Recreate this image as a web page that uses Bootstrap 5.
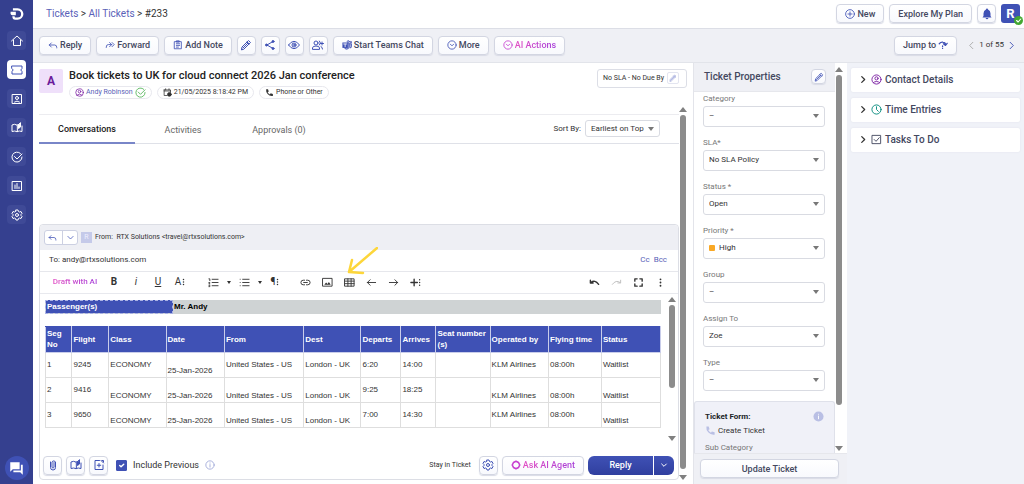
<!DOCTYPE html>
<html lang="en">
<head>
<meta charset="utf-8">
<meta name="viewport" content="width=device-width, initial-scale=1">
<title>Ticket #233</title>
<link href="https://cdn.jsdelivr.net/npm/bootstrap@5.3.0/dist/css/bootstrap.min.css" rel="stylesheet">
<style>
:root{--brand:#3f51b5;--ink:#44485f;--line:#dcdee6;--shade:#eff0f5}
body{font-family:Roboto,"Liberation Sans",sans-serif;font-size:8px;line-height:12px;color:#333;height:100vh;overflow:hidden;background:#fff}
a{text-decoration:none;color:#5a62b8}
svg{display:block;flex:none;fill:none;stroke:currentColor;stroke-width:2;stroke-linecap:round;stroke-linejoin:round;width:11px;height:11px}
.solid{fill:currentColor;stroke:none}
.t7{font-size:7px}.t9{font-size:9px}.t10{font-size:10px}.t11{font-size:11px}
.brandc{color:var(--brand)}
/* side rail */
.rail{width:33px;background:#35408f;flex:none;padding:6px 0 4px}
.rail a{width:19px;height:19px;border-radius:4px;background:#3f4a97;color:#fff}
.rail svg{width:12px;height:12px}
.rail a.on{background:#fff;color:var(--brand)}
.rail a.logo{background:none;height:16px}
.rail .logo svg{width:14px;height:14px}
.rail a.chat{width:24px;height:24px;border-radius:50%;background:#3f51b5}
.rail .chat svg{width:15px;height:15px}
/* buttons */
.tool{display:flex;align-items:center;justify-content:center;gap:2px;height:19px;padding:0 8px;border:1px solid #d3d6e2;border-radius:4px;background:linear-gradient(#fff,#f8f9fd);box-shadow:0 1px 1px #d9dbe6;color:var(--ink);font-size:9px;line-height:12px;font-weight:500;white-space:nowrap}
.tool svg{color:var(--brand);width:10px;height:10px}
.tool.sq{width:19px;padding:0}
.tool.sq svg{width:12px;height:12px}
.pink,.tool.pink svg{color:#c73fd0}
.grad{background:linear-gradient(90deg,#e24fc4,#a63fd8);-webkit-background-clip:text;background-clip:text;color:transparent}
.top-bar{height:29px;border-bottom:1px solid var(--line);padding:0 4px 0 13px}
.user-tile{width:19px;height:19px;border-radius:3px;background:var(--brand);color:#fff;font-size:13px;font-weight:700;position:relative}
.user-tile svg{position:absolute;right:-3px;bottom:-2px;width:9px;height:9px}
.action-bar{height:34px;background:var(--shade);border-bottom:1px solid #e2e4ea;padding:0 7px 0 6px;gap:5px}
/* ticket head */
.face{width:24px;height:24px;border-radius:2px;background:#efe0fa;color:#6a1b9a;font-size:12px;font-weight:700}
.chip{display:flex;align-items:center;gap:2px;height:13px;padding:0 5px;border:1px solid #e8e8ee;border-radius:7px;font-size:7px;line-height:10px;white-space:nowrap}
.chip svg{width:9px;height:9px}
.sla{height:19px;border:1px solid var(--line);border-radius:3px;padding:0 7px 0 5px;font-size:7px}
.sla button{width:12px;height:12px;border:1px solid #e3e5f0;border-radius:2px;background:#fff;color:#8f98d4;padding:1px}
.sla svg{width:8px;height:8px}
.tabs{height:30px;border-top:1px solid #ececf0;border-bottom:1px solid #dfe1e8}
.tabs button{width:96px;height:30px;border:0;background:none;color:#666;font-size:9px;padding:2px 0 0}
.tabs button.on{color:#222;font-weight:500;border-bottom:2px solid #7986c8}
/* selects */
.pick{display:flex;align-items:center;border:1px solid #d9dbe2;border-radius:3px;background:#fff;height:21px;padding:0 5px;gap:4px}
.pick select{appearance:none;border:0;background:none;outline:0;flex:1;min-width:0;font-size:8px;line-height:12px;color:#333;padding:0}
.pick::after{content:"";border:3px solid transparent;border-top:4px solid #777;border-bottom:0}
.sort{height:17px;width:75px}
/* scroll tracks */
.track{width:8px;flex:none;display:flex;flex-direction:column;align-items:center;justify-content:space-between}
.track::before,.track::after{content:"";border:4px solid transparent}
.track::before{border-bottom:5px solid #808080;border-top:0}
.track::after{border-top:5px solid #808080;border-bottom:0}
.track i{width:6px;border-radius:3px;background:#8c8c8c;margin:3px 0 auto}
/* composer */
.composer{margin-top:80px;border:1px solid #dcdee5;border-radius:4px;min-height:0}
.from{height:25px;background:#eeeff4;border-radius:4px 4px 0 0;padding:0 4px;font-size:7px}
.split{height:15px;border:1px solid #ccd0e2;border-radius:3px;background:#fff}
.split button{border:0;background:none;padding:0 3px;width:17px;color:var(--brand);height:100%}
.split button+button{border-left:1px solid #ccd0e2;width:15px}
.split svg{width:9px;height:9px}
.mono{width:11px;height:11px;background:#c5cae9;color:#eef;font-size:7px}
.to{height:22px;border-bottom:1px solid #e6e7ec;padding:0 11px 0 9px}
.to input{border:0;outline:0;font-size:8px;line-height:12px;color:#333;padding:0}
.edit{height:22px;border-bottom:1px solid #e8e9ee;padding:0 7px 0 12px}
.edit button{border:0;background:none;padding:0;width:22px;height:20px;color:#333;display:flex;align-items:center;justify-content:center;font-size:10px;position:relative}
.edit button.drop{width:9px}
.edit .lists{margin-left:11px}
.drop::after{content:"";border:2px solid transparent;border-top:3px solid #333;border-bottom:0}
.edit .draft{width:46px;font-size:8px;font-weight:500;margin-right:5px}
.edit svg.pointer{position:absolute;left:8px;bottom:17px;width:32px;height:28px;color:#fdd63a;z-index:2}
.sheet{font-family:"Liberation Sans",sans-serif;font-size:8px;line-height:11px;color:#333;padding:6px 7px 0 5px;min-width:0}
.pax{width:100%;height:14px;margin-bottom:12px;background:#cfd3d4;color:#000}
.pax th{padding:0 1px;width:127px;background:var(--brand);color:#fff;border:1px dashed #aab2e4}
.pax td{padding:0 1px;font-weight:700}
.trip{width:100%;table-layout:fixed}
.trip th,.trip td{border:1px solid #dedede;padding:0 1px}
.trip th{background:var(--brand);color:#fff;height:26px;border-color:#c9cdea;border-top-color:var(--brand)}
.trip td{height:25px;vertical-align:middle}
.trip td.lo{vertical-align:bottom;padding-bottom:1px}
.w1{width:4.3%}.w2{width:6%}.w3{width:9.3%}.w4{width:9.5%}.w5{width:12.9%}.w6{width:9.3%}.w7{width:6.5%}.w8{width:5.7%}.w9{width:8.8%}.w10{width:9.5%}.w11{width:8.6%}.w12{width:9.6%}
.foot{padding:0 4px 0 3px;height:28px;gap:4px}
.foot .form-check-input{width:11px;height:11px;margin:0 2px 0 4px;border-radius:1px}
.foot .form-check-input:checked{background-color:var(--brand);border-color:var(--brand)}
.foot .hint{width:10px;height:10px;color:#9aa3d6;margin-left:2px}
.send{background:linear-gradient(#3f51b5,#303f9f);color:#fff;border:0;height:19px;font-size:9px;line-height:12px;font-weight:500;padding:0}
.send.wide{width:65px}
.send.slim{width:20px}
.send svg{width:8px;height:8px;stroke-width:3}
/* properties */
.props{width:154px;flex:none;border-left:1px solid #e3e4ea}
.props-head{height:29px;background:var(--shade);border-bottom:1px solid #e6e7ec;padding:0 9px 0 10px;margin-bottom:1px;color:var(--ink)}
.props-head .tool.sq{width:15px;height:15px}
.props-head .tool.sq svg{width:10px;height:10px}
.field{margin:0 10px 10px 9px}
.field label,.lbl{display:block;color:#777;line-height:12px;margin-bottom:1px}
.hi{width:6px;height:6px;border-radius:1px;background:#f9a825}
.tform{background:#f0f1f8;border:1px solid #dfe1ea;border-bottom:0;border-radius:3px 3px 0 0;padding:9px 10px 0;flex:1;overflow:hidden}
.props-foot{height:31px;background:var(--shade);border-top:1px solid #e6e7ec;padding:5px 8px 0 6px}
.side{width:177px;flex:none;background:#f0f2f8;padding:5px 4px 0 4px}
.fold{width:100%;height:24px;margin-bottom:6px;border:0;border-radius:2px;background:#fff;box-shadow:0 0 2px #dfe1ea;display:flex;align-items:center;gap:3px;padding:0 7px;color:var(--ink);font-size:10px;line-height:12px;font-weight:500}
.fold svg:first-child{stroke-width:3;color:#333;width:10px}
</style>
</head>
<body class="d-flex">
<svg class="d-none">
<symbol id="reply" viewBox="0 0 24 24"><path d="M8 7 3 12l5 5M3 12h13q5 0 5 6v1"/></symbol>
<symbol id="fwd" viewBox="0 0 24 24"><path d="M11 6l5 5-5 5M16 11H8q-5 0-5 6v1M17 6l5 5-5 5"/></symbol>
<symbol id="note" viewBox="0 0 24 24"><path d="M4 4h16v17H4zM9 2h6v3H9zM8 9h8M8 13h8M8 17h5"/></symbol>
<symbol id="pen" viewBox="0 0 24 24"><path d="M3 21l1-5L17 3l4 4L8 20zM14 6l4 4M6 18 16 8"/></symbol>
<symbol id="share" viewBox="0 0 24 24"><path d="M6 12 18 5M6 12l12 7"/><g fill="currentColor"><circle cx="5" cy="12" r="2"/><circle cx="18" cy="5" r="2"/><circle cx="18" cy="19" r="2"/></g></symbol>
<symbol id="eye" viewBox="0 0 24 24"><path d="M1 12q11-15 22 0-11 15-22 0z"/><circle cx="12" cy="12" r="4"/><circle cx="12" cy="12" r="1"/></symbol>
<symbol id="people" viewBox="0 0 24 24"><circle cx="8" cy="8" r="4"/><path d="M1 20v-2q0-4 7-4t7 4v2zM15 4q4 4 0 8M20 6v6M17 9h6M18 15q3 1 3 5"/></symbol>
<symbol id="teams" viewBox="0 0 24 24"><path d="M14 9h9v7q-1 4-4 3M17 9v8q-1 5-6 5-4 0-5-3" fill="#9fa8da"/><path fill="currentColor" stroke="none" d="M1 6h13v13H1z"/><path stroke="#fff" d="M4 9.500h7M7.500 10v6"/><circle cx="15" cy="4" r="2.500"/><circle cx="21" cy="5" r="1.500"/></symbol>
<symbol id="down" viewBox="0 0 24 24"><circle cx="12" cy="12" r="10"/><path d="M8 10l4 4 4-4"/></symbol>
<symbol id="plus" viewBox="0 0 24 24"><circle cx="12" cy="12" r="10.500"/><path d="M12 7v10M7 12h10"/></symbol>
<symbol id="cl" viewBox="0 0 24 24"><path d="M15 5l-7 7 7 7"/></symbol>
<symbol id="cr" viewBox="0 0 24 24"><path d="M9 5l7 7-7 7"/></symbol>
<symbol id="cd" viewBox="0 0 24 24"><path d="M5 9l7 7 7-7"/></symbol>
<symbol id="person" viewBox="0 0 24 24"><circle cx="12" cy="12" r="10"/><circle cx="12" cy="9.500" r="3.500"/><path d="M5 19q7-6 14 0"/></symbol>
<symbol id="phone" viewBox="0 0 24 24"><path fill="currentColor" stroke="none" d="M3 3h5l2 6-3 2q2 4 6 6l2-3 6 2v5q-9 1-14-5T3 3z"/></symbol>
<symbol id="book" viewBox="0 0 24 24"><path d="M12 6Q7 3 2 6v13q5-2 10 0zM12 19q5-2 10 0V8M12 6q1-1 3-1"/><path fill="currentColor" d="M15 6v7l4-3V2z"/></symbol>
<symbol id="gear" viewBox="0 0 24 24"><path d="M10 2h4l1 3 2 1 3-1 2 4-2 2v2l2 2-2 4-3-1-2 1-1 3h-4l-1-3-2-1-3 1-2-4 2-2v-2L2 9l2-4 3 1 2-1z"/><circle cx="12" cy="12" r="3"/></symbol>
<symbol id="info" viewBox="0 0 24 24"><circle cx="12" cy="12" r="10"/><path d="M12 11v6M12 7v.5"/></symbol>
<symbol id="ok" viewBox="0 0 24 24"><path d="M19 5a10 10 0 1 0 3 7M7 11l5 5L22 6"/></symbol>
</svg>

<nav class="rail d-flex flex-column align-items-center" aria-label="Main">
  <a href="#" class="logo d-flex align-items-center justify-content-center" aria-label="Home page"><svg viewBox="0 0 24 24"><path stroke-width="4" stroke-linecap="butt" d="M5 4h8a8 8 0 0 1 0 16H9q-3 0-3-4"/><path class="solid" d="M1 8h9v6H4q-3 0-3-3z"/></svg></a>
  <div class="d-flex flex-column" style="gap:10px;margin-top:9px">
    <a href="#" class="d-flex align-items-center justify-content-center" aria-label="Home"><svg viewBox="0 0 24 24"><path d="M1 12 12 2l11 10M5 10v11h14V10"/></svg></a>
    <a href="#" class="on d-flex align-items-center justify-content-center" aria-label="Tickets"><svg viewBox="0 0 24 24"><path d="M2 4h20v5q-5 3 0 6v5H2v-5q5-3 0-6z"/></svg></a>
    <a href="#" class="d-flex align-items-center justify-content-center" aria-label="Contacts"><svg viewBox="0 0 24 24"><path d="M3 3h18v18H3zM7 18q5-4 10 0"/><circle cx="12" cy="10" r="3"/></svg></a>
    <a href="#" class="d-flex align-items-center justify-content-center" aria-label="Knowledge"><svg><use href="#book"/></svg></a>
    <a href="#" class="d-flex align-items-center justify-content-center" aria-label="Tasks"><svg><use href="#ok"/></svg></a>
    <a href="#" class="d-flex align-items-center justify-content-center" aria-label="Reports"><svg viewBox="0 0 24 24"><path d="M3 3h18v18H3zM8 10v7M12 7v10M16 14v3"/></svg></a>
    <a href="#" class="d-flex align-items-center justify-content-center" aria-label="Settings"><svg><use href="#gear"/></svg></a>
  </div>
  <a href="#" class="chat mt-auto d-flex align-items-center justify-content-center" aria-label="Chat"><svg class="solid" viewBox="0 0 24 24"><path d="M2 2h15v11H6l-4 4zM19 6h3v16l-4-4H7v-3h12z"/></svg></a>
</nav>

<div class="d-flex flex-column flex-grow-1" style="min-width:0">
  <header class="top-bar d-flex align-items-center">
    <div class="t10 me-auto"><a href="#">Tickets</a> &gt; <a href="#">All Tickets</a> &gt; #233</div>
    <div class="d-flex" style="gap:5px">
      <button class="tool"><svg><use href="#plus"/></svg>New</button>
      <button class="tool">Explore My Plan</button>
      <button class="tool sq" aria-label="Notifications"><svg class="solid" viewBox="0 0 24 24"><path d="M12 1a2 2 0 0 1 2 2q5 2 5 8v5l2 3H3l2-3v-5q0-6 5-8a2 2 0 0 1 2-2zM9 20h6q-3 5-6 0z"/></svg></button>
      <div class="user-tile d-flex align-items-center justify-content-center">R<svg viewBox="0 0 24 24"><circle fill="#43a832" stroke="none" cx="12" cy="12" r="12"/><path d="M7 12l4 4 7-8" stroke="#fff" stroke-width="3"/></svg></div>
    </div>
  </header>
  <div class="action-bar d-flex align-items-center">
    <button class="tool"><svg><use href="#reply"/></svg>Reply</button>
    <button class="tool"><svg><use href="#fwd"/></svg>Forward</button>
    <button class="tool"><svg><use href="#note"/></svg>Add Note</button>
    <button class="tool sq" aria-label="Edit"><svg><use href="#pen"/></svg></button>
    <button class="tool sq" aria-label="Share"><svg><use href="#share"/></svg></button>
    <button class="tool sq" aria-label="Watch"><svg><use href="#eye"/></svg></button>
    <button class="tool sq" aria-label="Add people"><svg><use href="#people"/></svg></button>
    <button class="tool"><svg><use href="#teams"/></svg>Start Teams Chat</button>
    <button class="tool"><svg><use href="#down"/></svg>More</button>
    <button class="tool pink"><svg><use href="#down"/></svg><span class="grad">AI Actions</span></button>
    <button class="tool ms-auto">Jump to <svg viewBox="0 0 24 24"><path stroke-width="3" d="M3 9q4-5 9-4 6 1 6 6M13 9l5 4 4-5M11 14v2M11 20v.1"/></svg></button>
    <div class="d-flex align-items-center ms-1" style="gap:2px"><svg style="color:#aaa"><use href="#cl"/></svg>1 of 55<svg class="brandc" stroke-width="3"><use href="#cr"/></svg></div>
  </div>

  <div class="d-flex flex-grow-1" style="min-height:0">
    <main class="d-flex flex-column flex-grow-1" style="min-width:0;padding:6px 6px 4px 6px">
      <div class="d-flex" style="gap:6px;height:38px">
        <div class="face d-flex align-items-center justify-content-center">A</div>
        <div class="me-auto">
          <h1 class="t11 m-0" style="line-height:14px;color:#222;font-weight:500">Book tickets to UK for cloud connect 2026 Jan conference</h1>
          <div class="d-flex" style="gap:5px;margin-top:3px">
            <span class="chip"><svg style="color:#7b1fa2"><use href="#person"/></svg><a href="#">Andy Robinson</a><svg style="color:#5cb860;width:11px;height:11px"><use href="#ok"/></svg></span>
            <span class="chip"><svg viewBox="0 0 24 24"><path d="M3 5h17v7M3 5v15h8M3 8h17M7 2v3M16 2v3"/><circle fill="currentColor" cx="17" cy="17" r="5"/></svg>21/05/2025 8:18:42 PM</span>
            <span class="chip"><svg><use href="#phone"/></svg>Phone or Other</span>
          </div>
        </div>
        <div class="sla d-flex align-items-center" style="gap:3px">No SLA - No Due By<button aria-label="Edit SLA"><svg><use href="#pen"/></svg></button></div>
      </div>
      <div class="d-flex flex-grow-1" style="min-height:0">
        <section class="d-flex flex-column flex-grow-1" style="min-width:0;padding-top:7px">
          <div class="tabs d-flex align-items-center">
            <button class="on">Conversations</button><button>Activities</button><button>Approvals (0)</button>
            <label class="ms-auto me-1" for="sort">Sort By:</label>
            <div class="pick sort" style="margin-right:19px"><select id="sort"><option>Earliest on Top</option></select></div>
          </div>
          <div class="composer d-flex flex-column flex-grow-1">
            <div class="from d-flex align-items-center" style="gap:3px">
              <div class="split d-flex"><button aria-label="Reply"><svg><use href="#reply"/></svg></button><button aria-label="Reply options"><svg><use href="#cd"/></svg></button></div>
              <span class="mono d-flex align-items-center justify-content-center">R</span>
              <span>From: &nbsp;RTX Solutions &lt;travel@rtxsolutions.com&gt;</span>
            </div>
            <div class="to d-flex align-items-center"><label for="to">To:&nbsp;</label><input id="to" class="flex-grow-1" value="andy@rtxsolutions.com"><a href="#" class="me-1">Cc</a><a href="#">Bcc</a></div>
            <div class="edit d-flex align-items-center">
              <button class="draft"><span class="grad text-nowrap">Draft with AI</span></button>
              <button class="fw-bold">B</button><button class="fst-italic">i</button><button class="text-decoration-underline">U</button>
              <button>A<svg style="width:4px;height:8px" viewBox="0 0 8 16"><path stroke-width="3" d="M5 3v.1M5 8v.1M5 13v.1"/></svg></button>
              <button class="lists" aria-label="Numbered list"><svg viewBox="0 0 24 24"><path d="M9 5h13M9 12h13M9 19h13M2 4h2v4M2 12h2l-2 3h2M2 18h2v3H2"/></svg></button><button class="drop" aria-label="Numbered list styles"></button>
              <button aria-label="Bullet list"><svg viewBox="0 0 24 24"><path d="M8 5h14M8 12h14M8 19h14M2.500 5h.1M2.500 12h.1M2.500 19h.1"/></svg></button><button class="drop" aria-label="Bullet list styles"></button>
              <button>¶<svg style="width:4px;height:8px" viewBox="0 0 8 16"><path stroke-width="3" d="M5 3v.1M5 8v.1M5 13v.1"/></svg></button>
              <button class="ms-2" aria-label="Link"><svg viewBox="0 0 24 24"><path d="M10 7H7a5 5 0 0 0 0 10h3M14 7h3a5 5 0 0 1 0 10h-3M8 12h8"/></svg></button>
              <button aria-label="Image"><svg viewBox="0 0 24 24"><path d="M2 3h20v17H2z"/><path fill="currentColor" stroke="none" d="M5 17l4-5 3 3 3-4 4 6z"/></svg></button>
              <button aria-label="Table"><svg viewBox="0 0 24 24"><path d="M2 4h20v16H2zM2 9h20M2 14.500h20M8.500 4v16M15.500 4v16"/></svg><svg class="pointer" viewBox="0 0 32 28"><path stroke-width="2.500" d="M31 1 3 25M6 13 3 25l14 1"/></svg></button>
              <button aria-label="Indent less"><svg viewBox="0 0 24 24"><path d="M21 12H3M9 6l-6 6 6 6"/></svg></button>
              <button aria-label="Indent more"><svg viewBox="0 0 24 24"><path d="M3 12h18M15 6l6 6-6 6"/></svg></button>
              <button aria-label="Insert more"><svg viewBox="0 0 24 24"><path stroke-width="3" d="M2 12h14M9 5v14M21 6v.1M21 12v.1M21 18v.1"/></svg></button>
              <button class="ms-auto" aria-label="Undo"><svg viewBox="0 0 24 24"><path stroke-width="3" d="M3 7v6h6M4 12q9-7 17 4"/></svg></button>
              <button aria-label="Redo"><svg style="color:#bbb" viewBox="0 0 24 24"><path d="M21 7v6h-6M20 12q-9-7-17 4"/></svg></button>
              <button aria-label="Full screen"><svg viewBox="0 0 24 24"><path stroke-width="3" d="M4 9V4h5M15 4h5v5M20 15v5h-5M9 20H4v-5"/></svg></button>
              <button aria-label="More"><svg viewBox="0 0 24 24"><path stroke-width="4" d="M12 5v.1M12 12v.1M12 19v.1"/></svg></button>
            </div>
            <div class="d-flex flex-grow-1" style="min-height:0">
              <div class="sheet flex-grow-1">
                <table class="pax"><tr><th>Passenger(s)</th><td>Mr. Andy</td></tr></table>
                <table class="trip">
                  <thead><tr><th class="w1">Seg No</th><th class="w2">Flight</th><th class="w3">Class</th><th class="w4">Date</th><th class="w5">From</th><th class="w6">Dest</th><th class="w7">Departs</th><th class="w8">Arrives</th><th class="w9">Seat number (s)</th><th class="w10">Operated by</th><th class="w11">Flying time</th><th class="w12">Status</th></tr></thead>
                  <tbody>
                  <tr><td>1</td><td>9245</td><td>ECONOMY</td><td class="lo">25-Jan-2026</td><td>United States - US</td><td>London - UK</td><td>6:20</td><td>14:00</td><td></td><td>KLM Airlines</td><td>08:00h</td><td>Waitlist</td></tr>
                  <tr><td>2</td><td>9416</td><td class="lo">ECONOMY</td><td class="lo">25-Jan-2026</td><td class="lo">United States - US</td><td class="lo">London - UK</td><td>9:25</td><td>18:25</td><td></td><td class="lo">KLM Airlines</td><td class="lo">08:00h</td><td class="lo">Waitlist</td></tr>
                  <tr><td>3</td><td>9650</td><td class="lo">ECONOMY</td><td class="lo">25-Jan-2026</td><td class="lo">United States - US</td><td class="lo">London - UK</td><td>7:00</td><td>14:30</td><td></td><td>KLM Airlines</td><td>08:00h</td><td class="lo">Waitlist</td></tr>
                  </tbody>
                </table>
              </div>
              <div class="track" style="margin:3px 2px 10px 0"><i style="height:58%"></i></div>
            </div>
            <div class="foot d-flex align-items-center">
              <button class="tool sq" aria-label="Attach"><svg viewBox="0 0 24 24"><path d="M7 6v11a5 5 0 0 0 10 0V6a4 4 0 0 0-7 0v10a2 2 0 0 0 4 0V7"/></svg></button>
              <button class="tool sq" aria-label="Articles"><svg><use href="#book"/></svg></button>
              <button class="tool sq" aria-label="Canned reply"><svg viewBox="0 0 24 24"><path d="M13 3H4v18h16v-9M12 9v7M8.500 12.500h7M16 3l5 5M18 3h3v3"/></svg></button>
              <input class="form-check-input" type="checkbox" id="prev" checked><label class="t9" for="prev">Include Previous</label>
              <svg class="hint"><use href="#info"/></svg>
              <span class="ms-auto t7">Stay in Ticket</span>
              <button class="tool sq ms-1" aria-label="Reply settings"><svg><use href="#gear"/></svg></button>
              <button class="tool pink"><svg style="stroke-width:4" viewBox="0 0 24 24"><path d="M12 3l6 3 3 6-3 6-6 3-6-3-3-6 3-6z"/></svg><span class="grad">Ask AI Agent</span></button>
              <div class="d-flex" style="gap:1px"><button class="send wide rounded-start">Reply</button><button class="send slim rounded-end d-flex align-items-center justify-content-center" aria-label="Reply options"><svg><use href="#cd"/></svg></button></div>
            </div>
          </div>
        </section>
        <div class="track"><i style="height:95%"></i></div>
      </div>
    </main>

    <aside class="props d-flex flex-column">
      <div class="d-flex flex-grow-1" style="min-height:0">
        <div class="d-flex flex-column flex-grow-1" style="min-width:0">
          <div class="props-head d-flex align-items-center justify-content-between"><h2 class="t10 m-0">Ticket Properties</h2><button class="tool sq" aria-label="Edit properties"><svg><use href="#pen"/></svg></button></div>
          <div class="field"><label for="f1">Category</label><div class="pick"><select id="f1"><option>–</option></select></div></div>
          <div class="field"><label for="f2">SLA*</label><div class="pick"><select id="f2"><option>No SLA Policy</option></select></div></div>
          <div class="field"><label for="f3">Status *</label><div class="pick"><select id="f3"><option>Open</option></select></div></div>
          <div class="field"><label for="f4">Priority *</label><div class="pick"><span class="hi"></span><select id="f4"><option>High</option></select></div></div>
          <div class="field"><label for="f5">Group</label><div class="pick"><select id="f5"><option>–</option></select></div></div>
          <div class="field"><label for="f6">Assign To</label><div class="pick"><select id="f6"><option>Zoe</option></select></div></div>
          <div class="field"><label for="f7">Type</label><div class="pick"><select id="f7"><option>–</option></select></div></div>
          <div class="tform">
            <div class="d-flex align-items-center justify-content-between fw-bold text-dark">Ticket Form:<svg style="color:#b9bfe4" viewBox="0 0 24 24"><circle class="solid" cx="12" cy="12" r="11"/><path stroke="#fff" d="M12 11v6M12 7v.1"/></svg></div>
            <div class="d-flex align-items-center" style="gap:2px;margin:2px 0 5px"><svg style="color:#b9bfe4"><use href="#phone"/></svg>Create Ticket</div>
            <span class="lbl">Sub Category</span>
          </div>
        </div>
        <div class="track" style="margin:4px 4px 2px 0"><i style="height:86%"></i></div>
      </div>
      <div class="props-foot"><button class="tool w-100">Update Ticket</button></div>
    </aside>

    <aside class="side">
      <button class="fold"><svg><use href="#cr"/></svg><svg style="color:#7b1fa2"><use href="#person"/></svg>Contact Details</button>
      <button class="fold"><svg><use href="#cr"/></svg><svg style="color:#00897b" viewBox="0 0 24 24"><circle cx="12" cy="12" r="10"/><path d="M12 6v6l4 4"/></svg>Time Entries</button>
      <button class="fold"><svg><use href="#cr"/></svg><svg viewBox="0 0 24 24"><path d="M3 3h18v18H3zM7 12l4 4 7-8"/></svg>Tasks To Do</button>
    </aside>
  </div>
</div>
<script src="https://cdn.jsdelivr.net/npm/bootstrap@5.3.0/dist/js/bootstrap.bundle.min.js"></script>
</body>
</html>
